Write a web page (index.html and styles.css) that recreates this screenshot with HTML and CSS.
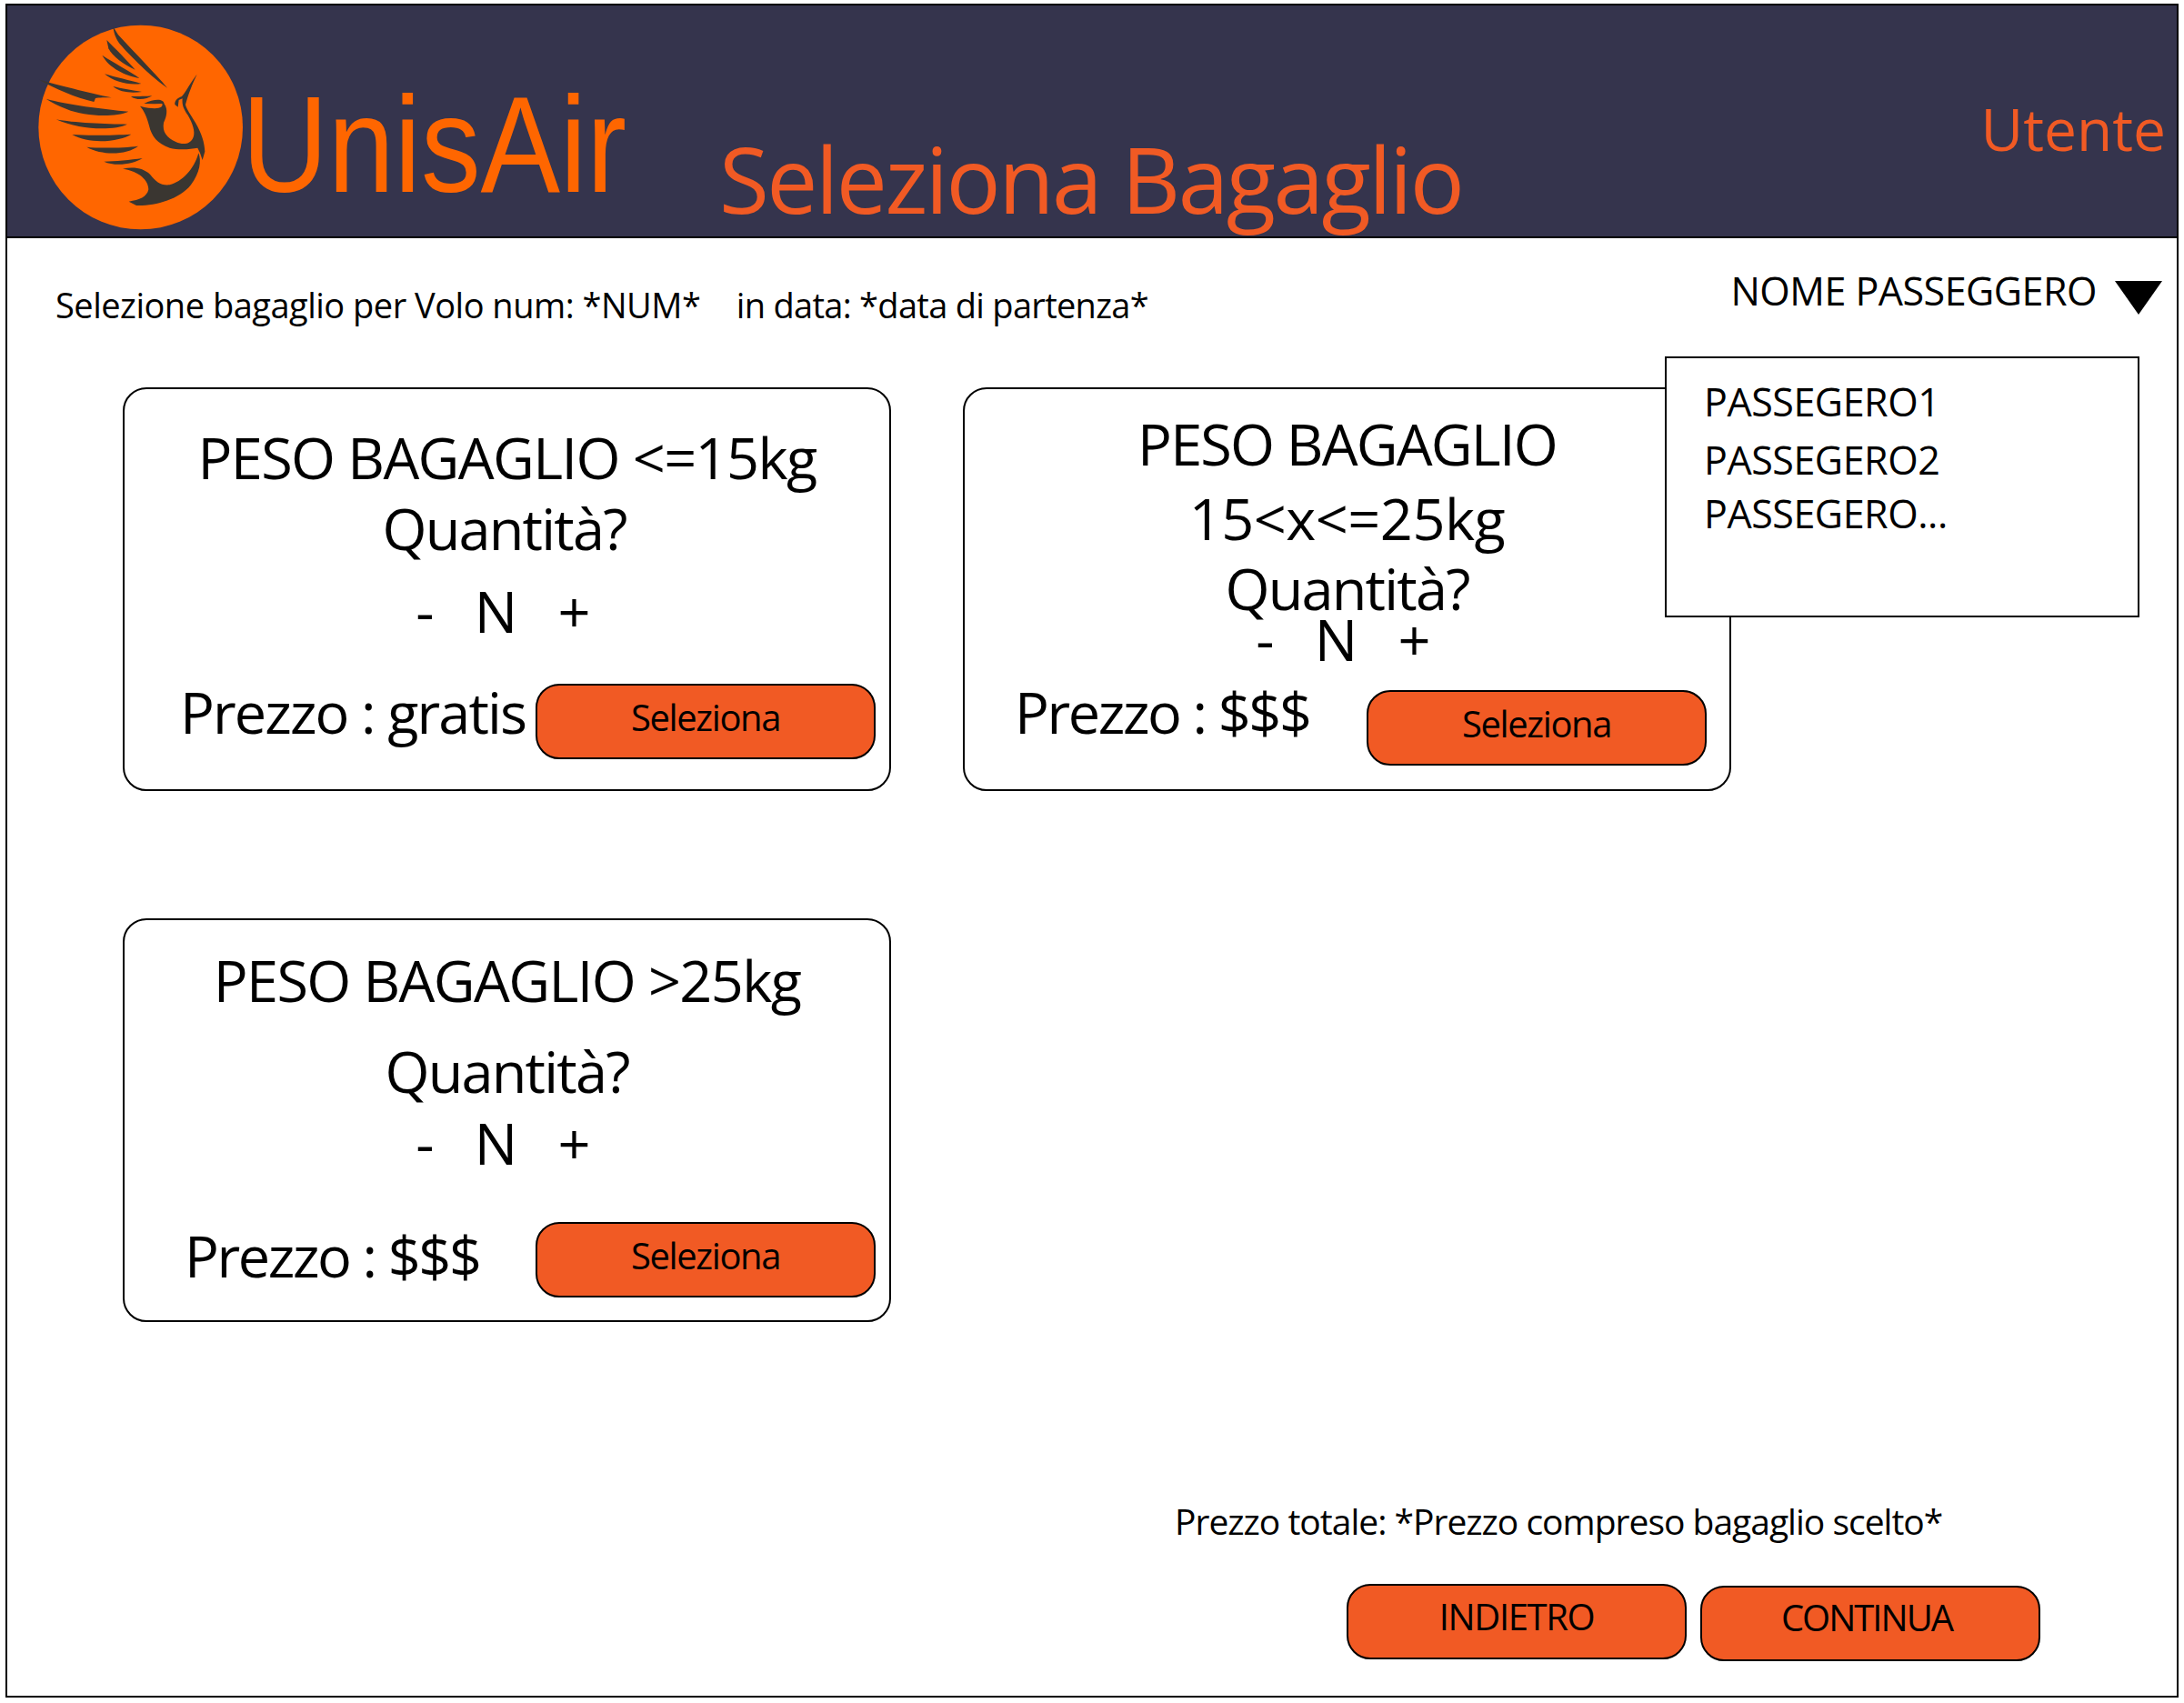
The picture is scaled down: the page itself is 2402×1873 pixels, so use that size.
FILE: index.html
```html
<!DOCTYPE html>
<html lang="it">
<head>
<meta charset="utf-8">
<title>UnisAir - Seleziona Bagaglio</title>
<link rel="stylesheet" href="styles.css">
</head>
<body>
<div class="frame">
  <header class="header">
    <svg class="logo" viewBox="0 0 750 720" width="250" height="240" aria-hidden="true">
      <circle cx="374" cy="360" r="337" fill="#ff6600"/>
      <g fill="#3a3631">
        <path d="M283 28 L300 55 C350 110 420 180 462 230 C410 195 340 125 305 85 C290 65 285 45 283 28Z"/>
        <path d="M262 72 C290 100 330 140 356 170 C320 155 280 125 268 100Z"/>
        <path d="M247 122 C280 145 340 175 370 198 C325 190 270 165 247 122Z"/>
        <path d="M255 184 C290 195 340 205 376 216 C335 222 285 210 255 184Z"/>
        <path d="M283 225 C310 232 350 238 378 243 C345 248 305 245 283 225Z"/>
        <path d="M342 258 C365 258 395 258 412 256 C395 268 360 273 342 258Z"/>
        <path d="M40 203 C100 220 200 245 278 262 C260 262 235 262 225 264 L220 276 C160 262 90 232 40 203Z"/>
        <path d="M62 266 C130 285 250 300 334 308 C290 328 190 325 130 300 C105 290 80 278 62 266Z"/>
        <path d="M95 334 C150 345 260 350 330 350 C290 370 180 372 95 334Z"/>
        <path d="M148 384 C200 388 290 386 343 383 C310 405 210 420 148 384Z"/>
        <path d="M196 425 C240 430 320 428 366 422 C330 450 250 455 196 425Z"/>
        <path d="M253 473 C290 472 340 468 380 462 C350 482 290 490 253 473Z"/>
        <path d="M315 497 C350 488 385 495 405 515 C425 540 440 553 470 550 C510 540 550 500 565 445 C575 470 570 510 540 550 C500 600 420 620 360 618 L335 605 C370 600 395 590 400 565 C400 535 370 505 315 497Z"/>
        <path d="M372 290 C385 305 395 325 402 355 C410 390 430 415 470 428 C500 436 540 432 562 428 L570 445 L578 468 L586 440 C585 410 575 380 555 345 C540 320 525 300 522 285 C530 255 545 215 560 185 C540 210 525 240 510 258 C500 262 485 270 487 285 L497 293 L500 270 L512 265 C510 285 515 300 530 320 C545 345 555 375 548 392 C540 415 515 420 490 408 C460 395 445 375 450 345 C460 325 465 300 452 283 C450 265 420 265 385 282 L420 283 L445 282 C450 295 430 305 372 290Z"/>
      </g>
    </svg>
    <div class="brand">UnisAir</div>
    <h1 class="title">Seleziona Bagaglio</h1>
    <div class="user">Utente</div>
  </header>

  <div class="subbar">
    <p class="flight">Selezione bagaglio per Volo num: *NUM* <span class="flight-date">in data: *data di partenza*</span></p>
    <div class="picker">
      <span>NOME PASSEGGERO</span>
      <svg class="caret" viewBox="0 0 52 37" width="52" height="37" aria-hidden="true"><path d="M0 0H52L26 37Z"/></svg>
    </div>
  </div>

  <ul class="menu">
    <li class="menu-a">PASSEGERO1</li>
    <li class="menu-b">PASSEGERO2</li>
    <li class="menu-c">PASSEGERO...</li>
  </ul>

  <main class="cards">
    <section class="card card-a">
      <div class="line l1">PESO BAGAGLIO &lt;=15kg</div>
      <div class="line l2">Quantità?</div>
      <div class="qty"><span>-</span><span>N</span><span>+</span></div>
      <div class="price"><span>Prezzo : gratis</span><button class="btn">Seleziona</button></div>
    </section>
    <section class="card card-b">
      <div class="line">PESO BAGAGLIO</div>
      <div class="line l2">15&lt;x&lt;=25kg</div>
      <div class="line l3">Quantità?</div>
      <div class="qty"><span>-</span><span>N</span><span>+</span></div>
      <div class="price"><span>Prezzo : $$$</span><button class="btn">Seleziona</button></div>
    </section>
    <section class="card card-c">
      <div class="line l1">PESO BAGAGLIO &gt;25kg</div>
      <div class="line l2">Quantità?</div>
      <div class="qty"><span>-</span><span>N</span><span>+</span></div>
      <div class="price"><span>Prezzo : $$$</span><button class="btn">Seleziona</button></div>
    </section>
  </main>

  <footer class="footer">
    <p class="total">Prezzo totale: *Prezzo compreso bagaglio scelto*</p>
    <div class="actions">
      <button class="btn back">INDIETRO</button>
      <button class="btn next">CONTINUA</button>
    </div>
  </footer>
</div>
</body>
</html>
```

FILE: styles.css
```css
* { box-sizing: border-box; }
html, body { margin: 0; padding: 0; background: #fff; }
body { font-family: "Open Sans", "Noto Sans", sans-serif; color: #000; }

.frame {
  position: relative;
  width: 2390px;
  height: 1863px;
  margin: 4px 0 0 6px;
  border: 2px solid #000;
}

.header {
  display: flex;
  align-items: flex-start;
  height: 256px;
  background: #35344d;
  border-bottom: 2px solid #000;
  color: #f15a24;
  padding: 14px 0 0 22px;
}
.logo { flex: none; }
.brand {
  flex: none;
  width: 415px;
  margin: 53px 0 0 -14px;
  font: 150px/172px "Liberation Sans", Arial, sans-serif;
  color: #ff6600;
  transform: scaleX(.875);
  transform-origin: left top;
  white-space: nowrap;
}
.title {
  margin: 116px 0 0 110px;
  font-size: 100px;
  line-height: 120px;
  font-weight: 400;
  letter-spacing: -2.5px;
  white-space: nowrap;
}
.user {
  margin: 77px 12px 0 auto;
  font-size: 64px;
  line-height: 90px;
}

.subbar {
  display: flex;
  justify-content: space-between;
  padding: 0 16px 0 53px;
  height: 130px;
}
.flight {
  margin: 48px 0 0;
  font-size: 38px;
  line-height: 50px;
  letter-spacing: -.5px;
  white-space: nowrap;
}
.flight-date { margin-left: 30px; letter-spacing: -.7px; }
.picker {
  display: flex;
  align-items: flex-start;
  gap: 20px;
  margin-top: 29px;
  font-size: 43px;
  line-height: 58px;
  letter-spacing: -.5px;
}
.caret { margin-top: 18px; }

.menu {
  position: absolute;
  left: 1823px;
  top: 386px;
  width: 522px;
  height: 287px;
  margin: 0;
  padding: 0 0 0 41px;
  list-style: none;
  background: #fff;
  border: 2px solid #000;
  font-size: 43px;
  letter-spacing: -.45px;
  line-height: 58px;
}
.menu-a { margin-top: 19px; }
.menu-b { margin-top: 6px; }
.menu-c { margin-top: 1px; }

.cards {
  display: grid;
  grid-template-columns: 845px 845px;
  grid-auto-rows: 444px;
  column-gap: 79px;
  row-gap: 140px;
  padding-left: 127px;
  margin-top: 34px;
}
.card {
  display: flex;
  flex-direction: column;
  background: #fff;
  border: 2px solid #000;
  border-radius: 26px;
  font-size: 63px;
  line-height: 78px;
  letter-spacing: -1.8px;
  text-align: center;
}
.line { white-space: nowrap; }
.l1 { letter-spacing: -1.6px; }
.qty {
  display: flex;
  justify-content: center;
  align-items: baseline;
  gap: 46px;
  padding-right: 10px;
}
.price {
  display: flex;
  justify-content: space-between;
  align-items: flex-start;
  white-space: nowrap;
  letter-spacing: -2.4px;
}
.btn {
  flex: none;
  width: 374px;
  height: 83px;
  padding: 0 0 10px;
  background: #f15a24;
  border: 2px solid #000;
  border-radius: 26px;
  color: #000;
  font-family: inherit;
  font-size: 40px;
  letter-spacing: -1.4px;
}
.card-a { padding-top: 36px; }
.card-a .l2 { margin-top: 0; padding-right: 6px; }
.card-a .qty { margin-top: 13px; }
.card-a .price { margin-top: 33px; padding: 0 15px 0 61px; letter-spacing: -1.9px; }
.card-a .btn { margin-top: 8px; }

.card-b { padding-top: 21px; }
.card-b .l2 { margin-top: 4px; letter-spacing: -.5px; }
.card-b .l3 { margin-top: -1px; }
.card-b .qty { margin-top: -22px; }
.card-b .price { margin-top: 2px; padding: 0 25px 0 55px; }
.card-b .btn { margin-top: 15px; }

.card-c { padding-top: 27px; }
.card-c .l2 { margin-top: 22px; }
.card-c .qty { margin-top: 1px; }
.card-c .price { margin-top: 46px; padding: 0 15px 0 66px; }
.card-c .btn { margin-top: 2px; }

.footer {
  position: relative;
  padding-left: 1284px;
}
.total {
  margin: 0;
  padding-top: 193px;
  font-size: 39px;
  line-height: 52px;
  letter-spacing: -1px;
  white-space: nowrap;
}
.actions {
  display: flex;
  align-items: flex-start;
  gap: 15px;
  margin: 43px 0 0 189px;
}
.back { padding-bottom: 12px; }
.next { margin-top: 2px; padding: 0 8px 14px 0; letter-spacing: -2px; }
```
